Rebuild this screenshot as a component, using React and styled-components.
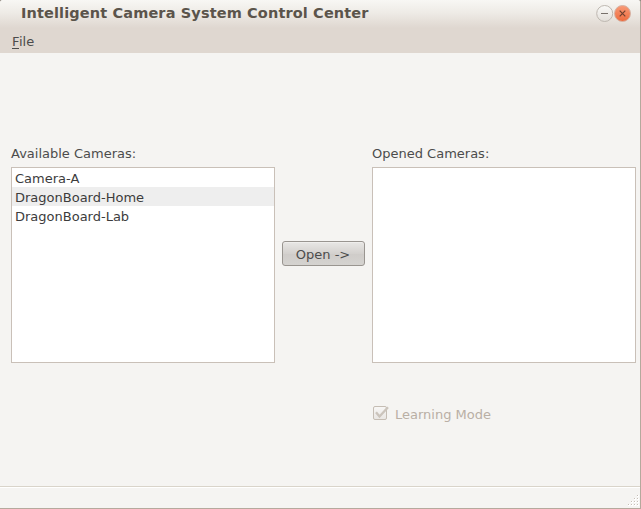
import React from "react";
import styled, { createGlobalStyle } from "styled-components";

const GlobalStyle = createGlobalStyle`
  * { box-sizing: border-box; }
  body { margin: 0; overflow: hidden; background: #8f887f; }
`;

const Window = styled.div`
  width: 641px;
  height: 509px;
  display: flex;
  flex-direction: column;
  background: #f5f4f2;
  border-right: 1px solid #b5a99d;
  border-bottom: 1px solid #b5a99d;
  border-radius: 3px 3px 0 0;
  overflow: hidden;
  font-family: "DejaVu Sans", sans-serif;
  font-size: 13px;
  line-height: 19px;
  color: #4c4c4c;
  white-space: nowrap;
`;

const TitleBar = styled.header`
  height: 28px;
  flex: none;
  display: flex;
  justify-content: space-between;
  padding: 4px 8px 0 21px;
  background: linear-gradient(#f8f7f4, #eeebe6 45%, #dfd7d0);
`;

const Title = styled.h1`
  margin: 0;
  font-size: 14.5px;
  line-height: 18px;
  font-weight: bold;
  letter-spacing: 0.13px;
  color: #5b544b;
`;

const WindowButtons = styled.div`
  display: flex;
  height: 18px;
  svg { display: block; }
`;

const MenuBar = styled.nav`
  height: 25px;
  flex: none;
  padding: 4px 12px 0;
  background: #dfd7d0;
`;

const Mnemonic = styled.span`
  display: inline-block;
  height: 17px;
  width: 7px;
  border-bottom: 1px solid #4c4c4c;
`;

const Main = styled.main`
  flex: 1;
  display: grid;
  grid-template-columns: 264px 83px 264px;
  column-gap: 7px;
  align-content: start;
  padding: 91px 0 0 11px;
`;

const Column = styled.section`
  display: flex;
  flex-direction: column;
`;

const Label = styled.div`
  height: 23px;
`;

const CameraList = styled.ul`
  list-style: none;
  margin: 0;
  padding: 0;
  height: 196px;
  background: #fff;
  border: 1px solid #c9c0b8;
`;

const CameraItem = styled.li`
  height: 19px;
  line-height: 21px;
  padding-left: 3px;
  color: #3c3c3c;
  background: ${(p) => (p.$shaded ? "#eee" : "transparent")};
`;

const OpenButton = styled.button`
  width: 83px;
  height: 25px;
  margin-top: 97px;
  padding: 2px 1px 0 0;
  border: 1px solid #999590;
  border-radius: 3px;
  background: linear-gradient(#e8e7e5, #d4d1ce 50%, #cfccc9 52%, #d5d3d0);
  box-shadow: inset 0 1px #efeeec;
  font: inherit;
  color: #4c4c4c;
`;

const CheckRow = styled.div`
  display: flex;
  margin-top: 41px;
  color: #b9afa5;
  svg { display: block; margin-right: 5px; }
`;

const CheckLabel = styled.span`
  padding-top: 1px;
`;

const StatusBar = styled.footer`
  height: 22px;
  flex: none;
  display: flex;
  justify-content: flex-end;
  align-items: flex-end;
  border-top: 1px solid #d9d4ca;
  box-shadow: inset 0 1px #fff;
  padding: 0 1px 2px 0;
`;

const Minimize = () => (
  <svg width="18" height="18" viewBox="0 0 18 18">
    <defs>
      <linearGradient id="min" x2="0" y2="1">
        <stop stopColor="#fafaf8" />
        <stop offset="1" stopColor="#e2ded9" />
      </linearGradient>
    </defs>
    <circle cx="8.7" cy="9.5" r="8" fill="url(#min)" stroke="#bdb7b0" />
    <path d="M5 9.5h7" stroke="#77716b" />
  </svg>
);

const Close = () => (
  <svg width="18" height="18" viewBox="0 0 18 18">
    <defs>
      <linearGradient id="close" x2="0" y2="1">
        <stop stopColor="#f99b78" />
        <stop offset="1" stopColor="#ed6a3c" />
      </linearGradient>
    </defs>
    <circle cx="8.5" cy="9.5" r="8" fill="url(#close)" stroke="#d5b3a5" />
    <path d="M5.7 6.7l5.6 5.6M11.3 6.7l-5.6 5.6" stroke="#71402f" strokeWidth="1.2" />
  </svg>
);

const Check = () => (
  <svg width="18" height="18" viewBox="0 0 18 18">
    <defs>
      <linearGradient id="box" x2="0" y2="1">
        <stop stopColor="#f8f7f6" />
        <stop offset="1" stopColor="#e9e6e3" />
      </linearGradient>
    </defs>
    <rect x="1.5" y="2.5" width="13" height="13" rx="1.5" fill="url(#box)" stroke="#c5bdb4" />
    <path d="M4 8.2l3.5 4.3L16 3.2" fill="none" stroke="#cbc4bc" strokeWidth="2.3" />
  </svg>
);

const gripDots = [[9, 0], [6, 3], [9, 3], [3, 6], [6, 6], [9, 6], [0, 9], [3, 9], [6, 9], [9, 9]];

const Grip = () => (
  <svg width="11" height="11" viewBox="0 0 11 11">
    {gripDots.map(([x, y]) => (
      <g key={`${x}-${y}`}>
        <rect x={x} y={y} width="2" height="2" fill="#fff" />
        <rect x={x} y={y} width="1" height="1" fill="#c6beb6" />
      </g>
    ))}
  </svg>
);

const cameras = ["Camera-A", "DragonBoard-Home", "DragonBoard-Lab"];

export default function App() {
  return (
    <Window>
      <GlobalStyle />
      <TitleBar>
        <Title>Intelligent Camera System Control Center</Title>
        <WindowButtons>
          <Minimize />
          <Close />
        </WindowButtons>
      </TitleBar>
      <MenuBar><Mnemonic>F</Mnemonic>ile</MenuBar>
      <Main>
        <Column>
          <Label>Available Cameras:</Label>
          <CameraList>
            {cameras.map((name, i) => (
              <CameraItem key={name} $shaded={i % 2 === 1}>{name}</CameraItem>
            ))}
          </CameraList>
        </Column>
        <OpenButton>Open -&gt;</OpenButton>
        <Column>
          <Label>Opened Cameras:</Label>
          <CameraList />
          <CheckRow>
            <Check />
            <CheckLabel>Learning Mode</CheckLabel>
          </CheckRow>
        </Column>
      </Main>
      <StatusBar><Grip /></StatusBar>
    </Window>
  );
}
